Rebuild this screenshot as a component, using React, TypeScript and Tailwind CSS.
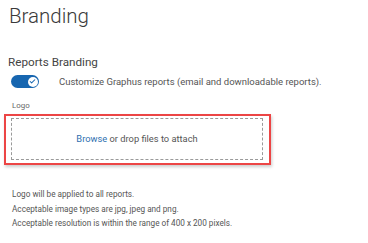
import { Check } from 'lucide-react';

export default function App() {
  return (
    <div className="w-[368px] h-[243px] bg-white overflow-hidden font-['Roboto',sans-serif]">
      <h1 className="pl-[9px] pt-[4px] text-[20.5px] leading-[24px] font-light text-[#3a3a3a]">Branding</h1>

      <div className="pl-[8px] mt-[27px]">
        <h2 className="text-[11.7px] leading-[14px] text-[#444]">Reports Branding</h2>

        {/* Toggle row */}
        <div className="flex items-center mt-[6px] pl-[3px]">
          <div className="relative w-[28px] h-[13px] rounded-full bg-[#1766b0]">
            <div className="absolute right-[1.5px] top-[1.5px] w-[10px] h-[10px] rounded-full bg-white flex items-center justify-center">
              <Check size={7} strokeWidth={3.5} className="text-[#1766b0]" />
            </div>
          </div>
          <span className="ml-[20px] text-[9.5px] leading-[12px] text-[#555]">
            Customize Graphus reports (email and downloadable reports).
          </span>
        </div>
      </div>

      <div className="mt-[13px] pl-[4px]">
        <label className="block pl-[8px] text-[7.9px] leading-[10px] text-[#666]">Logo</label>

        {/* Drop zone, highlighted */}
        <div className="mt-[3px] w-[267px] h-[51px] border-2 border-[#ec4545] shadow-[1px_2px_3px_rgba(0,0,0,0.2)] pl-[5px] pr-[6px] pt-[2px] pb-[3px]">
          <div className="h-full border border-dashed border-[#9a9a9a] flex items-center justify-center text-[9.3px] text-[#555]">
            <span>
              <span className="text-[#2f6fb0]">Browse</span> or drop files to attach
            </span>
          </div>
        </div>
      </div>

      <div className="pl-[12px] mt-[22px] flex flex-col text-[8.2px] leading-[14.5px] text-[#555]">
        <span>Logo will be applied to all reports.</span>
        <span>Acceptable image types are jpg, jpeg and png.</span>
        <span>Acceptable resolution is within the range of 400 x 200 pixels.</span>
      </div>
    </div>
  );
}
